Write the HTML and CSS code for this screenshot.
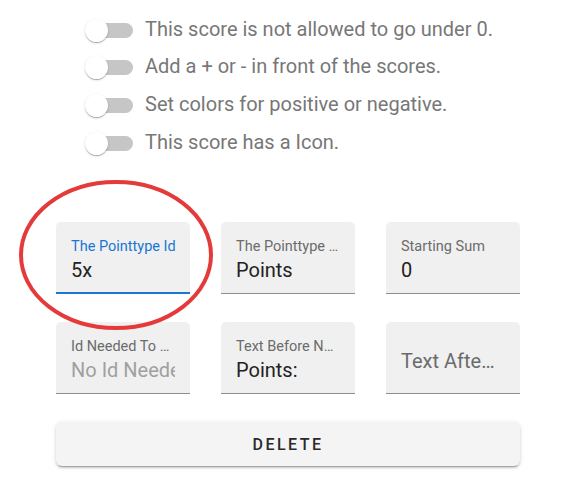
FILE: index.html
```html
<!DOCTYPE html>
<html>
<head>
<meta charset="utf-8">
<link rel="stylesheet" href="styles.css">
</head>
<body>
<div class="page">
  <div class="switches">
    <div class="switch-row"><span class="switch"><span class="track"></span><span class="thumb"></span></span><span class="switch-label">This score is not allowed to go under 0.</span></div>
    <div class="switch-row"><span class="switch"><span class="track"></span><span class="thumb"></span></span><span class="switch-label">Add a + or - in front of the scores.</span></div>
    <div class="switch-row"><span class="switch"><span class="track"></span><span class="thumb"></span></span><span class="switch-label">Set colors for positive or negative.</span></div>
    <div class="switch-row"><span class="switch"><span class="track"></span><span class="thumb"></span></span><span class="switch-label">This score has a Icon.</span></div>
  </div>

  <div class="fields">
    <div class="field focused">
      <span class="label">The Pointtype Id</span>
      <span class="value">5x</span>
    </div>
    <div class="field">
      <span class="label">The Pointtype Name</span>
      <span class="value">Points</span>
    </div>
    <div class="field">
      <span class="label">Starting Sum</span>
      <span class="value">0</span>
    </div>
    <div class="field">
      <span class="label">Id Needed To Unlock</span>
      <span class="value muted">No Id Needed</span>
    </div>
    <div class="field">
      <span class="label">Text Before Number</span>
      <span class="value">Points:</span>
    </div>
    <div class="field empty">
      <span class="label big">Text After Number</span>
    </div>
  </div>

  <button class="delete">DELETE</button>

  <svg class="annotation" width="210" height="160" viewBox="0 0 210 160">
    <ellipse cx="97" cy="77" rx="95" ry="73" fill="none" stroke="#e53a3a" stroke-width="4"/>
  </svg>
</div>
</body>
</html>
```

FILE: styles.css
```css
* { box-sizing: border-box; }
html, body { margin: 0; padding: 0; background: #fff; }
body {
  font-family: Roboto, "Liberation Sans", Arial, sans-serif;
  width: 576px;
  height: 491px;
  overflow: hidden;
}
.page {
  position: relative;
  padding: 12px 0 0 56px;
}
.switches {
  display: flex;
  flex-direction: column;
  padding-left: 29px;
}
.switch-row {
  display: flex;
  align-items: center;
  height: 37.6px;
}
.switch {
  position: relative;
  width: 60px;
  height: 24px;
  flex: none;
}
.track {
  position: absolute;
  left: 6px;
  top: 4px;
  width: 42px;
  height: 15px;
  border-radius: 8px;
  background: #c6c6c6;
}
.thumb {
  position: absolute;
  left: 0;
  top: 0;
  width: 23px;
  height: 23px;
  border-radius: 50%;
  background: #fff;
  box-shadow: 0 2px 1px -1px rgba(0,0,0,0.2), 0 1px 1px 0 rgba(0,0,0,0.14), 0 1px 3px 0 rgba(0,0,0,0.12);
}
.switch-label {
  font-size: 20px;
  color: #777;
  line-height: 1;
  position: relative;
  top: -2px;
}
.fields {
  display: grid;
  grid-template-columns: repeat(3, 134px);
  column-gap: 31px;
  row-gap: 28px;
  margin-top: 60px;
}
.field {
  position: relative;
  height: 72px;
  background: #f0f0f0;
  border-radius: 5px 5px 0 0;
  border-bottom: 1px solid #8d8d8d;
  padding: 16px 15px 0 15px;
  display: flex;
  flex-direction: column;
}
.field.focused {
  border-bottom: 2px solid #1976d2;
}
.label {
  font-size: 14.5px;
  color: #6b6b6b;
  line-height: 17px;
  white-space: nowrap;
  overflow: hidden;
  text-overflow: ellipsis;
  max-width: 104px;
}
.focused .label {
  color: #1976d2;
  max-width: none;
  width: max-content;
  overflow: visible;
}
.value {
  font-size: 20px;
  color: #222;
  line-height: 22px;
  margin-top: 4px;
  white-space: nowrap;
  overflow: hidden;
}
.value.muted { color: #a0a0a0; }
.label.big {
  font-size: 20px;
  line-height: 22px;
  margin-top: 12px;
  color: #6b6b6b;
  max-width: 98px;
}
.delete {
  display: block;
  width: 464px;
  height: 44px;
  margin-top: 28px;
  border: none;
  border-radius: 6px;
  background: #f4f4f4;
  box-shadow: 0 3px 1px -2px rgba(0,0,0,0.2), 0 2px 2px 0 rgba(0,0,0,0.14), 0 1px 5px 0 rgba(0,0,0,0.12);
  font-family: Roboto, "Liberation Sans", Arial, sans-serif;
  font-size: 16px;
  font-weight: 500;
  letter-spacing: 2.5px;
  color: #2a2a2a;
  padding: 0;
}
.annotation {
  position: absolute;
  left: 19px;
  top: 178px;
  pointer-events: none;
}
```
